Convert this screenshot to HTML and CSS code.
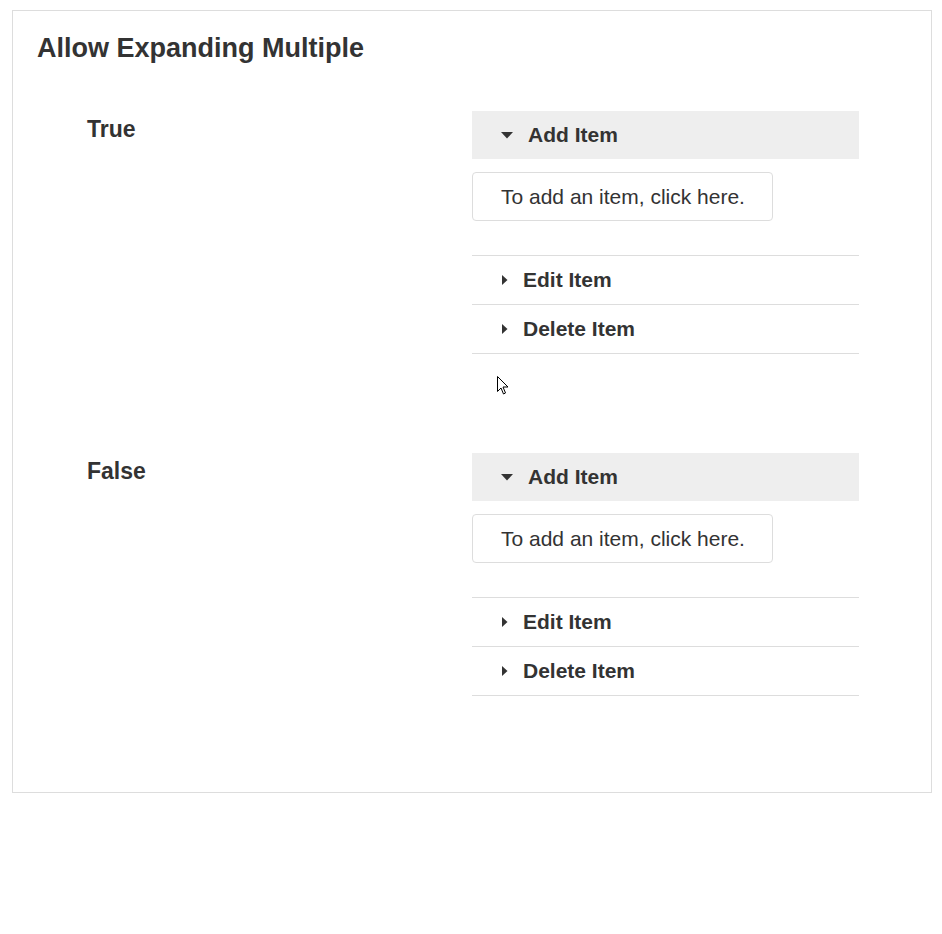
FILE: index.html
```html
<!DOCTYPE html>
<html>
<head>
<meta charset="utf-8">
<link rel="stylesheet" href="styles.css">
</head>
<body>
<div class="panel">
  <h1 class="title">Allow Expanding Multiple</h1>
  <div class="section">
    <div class="label">True</div>
    <div class="accordion">
      <div class="item open">
        <div class="head"><svg class="caret-down" width="12" height="7" viewBox="0 0 12 7"><path d="M0 0H12L6 6.5Z" fill="#333"/></svg><span>Add Item</span></div>
        <div class="body"><div class="note">To add an item, click here.</div></div>
      </div>
      <div class="item"><div class="head"><svg class="caret-right" width="6" height="10" viewBox="0 0 6 10"><path d="M0 0L5.5 5L0 10Z" fill="#333"/></svg><span>Edit Item</span></div></div>
      <div class="item"><div class="head"><svg class="caret-right" width="6" height="10" viewBox="0 0 6 10"><path d="M0 0L5.5 5L0 10Z" fill="#333"/></svg><span>Delete Item</span></div></div>
    </div>
  </div>
  <div class="section">
    <div class="label">False</div>
    <div class="accordion">
      <div class="item open">
        <div class="head"><svg class="caret-down" width="12" height="7" viewBox="0 0 12 7"><path d="M0 0H12L6 6.5Z" fill="#333"/></svg><span>Add Item</span></div>
        <div class="body"><div class="note">To add an item, click here.</div></div>
      </div>
      <div class="item"><div class="head"><svg class="caret-right" width="6" height="10" viewBox="0 0 6 10"><path d="M0 0L5.5 5L0 10Z" fill="#333"/></svg><span>Edit Item</span></div></div>
      <div class="item"><div class="head"><svg class="caret-right" width="6" height="10" viewBox="0 0 6 10"><path d="M0 0L5.5 5L0 10Z" fill="#333"/></svg><span>Delete Item</span></div></div>
    </div>
  </div>
  <svg class="cursor" width="12" height="19" viewBox="0 0 12 19"><path d="M0.5 0.5V15.5L4 12L6.5 18L8.5 17L6 11H11Z" fill="#fff" stroke="#000" stroke-width="1" stroke-linejoin="round"/></svg>
</div>
</body>
</html>
```
FILE: styles.css
```css
* { box-sizing: border-box; }
html, body { background: #fff; }
body {
  margin: 10px 10px 0 12px;
  font-family: "Liberation Sans", Arial, sans-serif;
  color: #333;
}
.panel {
  position: relative;
  width: 920px;
  height: 783px;
  border: 1px solid #ddd;
  padding: 22px 24px 0 24px;
}
.title {
  margin: 0 0 48px 0;
  font-size: 27px;
  line-height: 30px;
  font-weight: bold;
}
.section {
  display: flex;
  margin-bottom: 99px;
}
.label {
  width: 435px;
  padding-left: 50px;
  padding-top: 5px;
  font-size: 23px;
  font-weight: bold;
  line-height: 26px;
}
.accordion {
  width: 387px;
}
.head {
  display: flex;
  align-items: center;
  height: 48px;
  padding-left: 29px;
  font-size: 21px;
  font-weight: bold;
}
.caret-down { margin-right: 15px; }
.caret-right { margin-left: 1px; margin-right: 15px; }
.item.open .head { background: #eee; }
.item.open .body { padding: 13px 0 34px 0; }
.item + .item { border-top: 1px solid #ddd; }
.item:last-child { border-bottom: 1px solid #ddd; }
.note {
  width: 301px;
  height: 49px;
  border: 1px solid #ddd;
  border-radius: 4px;
  padding-left: 28px;
  display: flex;
  align-items: center;
  font-size: 21px;
}
.cursor {
  position: absolute;
  left: 484px;
  top: 365px;
}
```
